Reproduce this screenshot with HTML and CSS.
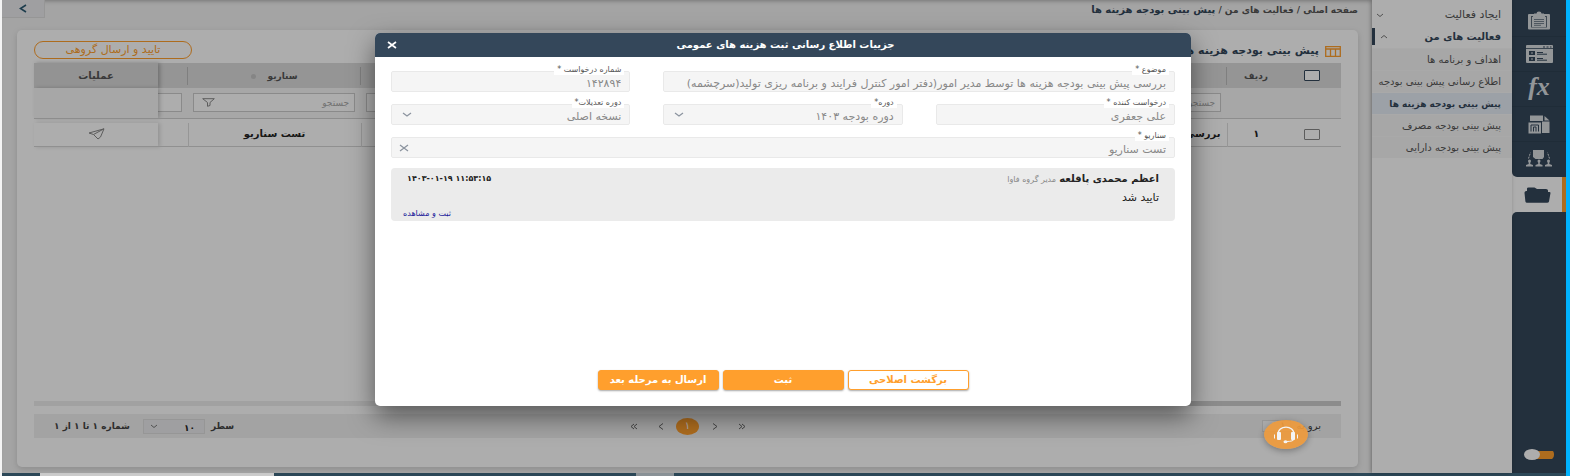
FILE: index.html
```html
<!DOCTYPE html>
<html lang="fa" dir="rtl">
<head>
<meta charset="utf-8">
<title>پیش بینی بودجه هزینه ها</title>
<link rel="stylesheet" href="styles.css">
</head>
<body>
<div class="app">
  <nav class="rail" aria-label="ماژول ها">
    <a class="rail-item" href="#" aria-label="فرم ها"><svg width="24" height="19" viewBox="0 0 24 19"><rect x="1" y="3" width="22" height="15.500" rx="1" fill="#d9dde1"/><path d="M7 5V2.500h2.500a2.500 2 0 0 1 5 0H17V5z" fill="#d9dde1"/><path d="M4 5v11.500h16V5h-2v1.500H6V5z" fill="#5a6978"/><rect x="5" y="6" width="14" height="10" fill="#d9dde1"/><path d="M7 8.500h10M7 10.500h10M7 12.500h10M7 14.300h7" stroke="#5a6978" stroke-width=".8"/></svg></a>
    <a class="rail-item" href="#" aria-label="لیست ها"><svg width="27" height="18" viewBox="0 0 27 18"><rect width="27" height="18" rx="1" fill="#d9dde1"/><path d="M0 3.500h27" stroke="#34475a" stroke-width=".8"/><path d="M17 2h2M20.500 2h2M24 2h1.500" stroke="#34475a"/><rect x="3" y="6" width="6" height="4" fill="#34475a"/><rect x="3" y="12" width="6" height="4" fill="#34475a"/><path d="M5 8h2M5 14h2" stroke="#d9dde1"/><path d="M11 7.500h6M11 9.200h10M11 13.500h6M11 15.200h10" stroke="#34475a"/></svg></a>
    <a class="rail-item fx" href="#">fx</a>
    <a class="rail-item" href="#" aria-label="گزارش ها"><svg width="22" height="19" viewBox="0 0 22 19"><path d="M2 .5h13V6H2z" fill="#d9dde1"/><path d="M14 6.500h7.500v11.500H14z" fill="#d9dde1"/><path d="M16.500 1l5 4.500h-5z" fill="#d9dde1"/><rect x=".5" y="7.500" width="12.500" height="11" fill="#d9dde1"/><path d="M3 16.500V10h7.500v6.500M5.500 16.500V12h2.500v4.500" stroke="#34475a" stroke-width="1" fill="none"/></svg></a>
    <a class="rail-item last" href="#" aria-label="جلسات"><svg width="26" height="18" viewBox="0 0 26 18"><path d="M7 1h11v7l-1.500 2H9.500L7 8z" fill="#d9dde1"/><path d="M2.500 9.500l2-6M23.500 9.500l-2-6" stroke="#d9dde1" stroke-dasharray="2 1"/><g fill="#d9dde1"><circle cx="3.500" cy="12" r="1.500"/><path d="M0 17.500V16l2.700-1v-2h1.600v2L7 16v1.500z"/><circle cx="13" cy="12" r="1.500"/><path d="M9.500 17.500V16l2.700-1v-2h1.600v2l2.700 1v1.500z"/><circle cx="22.500" cy="12" r="1.500"/><path d="M19 17.500V16l2.700-1v-2h1.600v2l2.700 1v1.500z"/></g></svg></a>
    <a class="rail-item active" href="#" aria-label="پوشه ها"><svg width="27" height="16" viewBox="0 0 27 16"><path d="M3 4V1.500Q3 .5 4.500.5h6L13 2h9q2 0 2 1.500V5h1.500q1 0 1 1l-1.500 8.500q-.3 1.200-2 1.200H3q-1.300 0-1.600-1.200L.5 6Q.3 4.500 2 4z" fill="#34475a"/></svg></a>
    <div class="rail-rest">
      <input class="switch" type="checkbox" checked aria-label="تغییر حالت">
    </div>
  </nav>

  <aside class="menu">
    <a class="menu-head" href="#">ایجاد فعالیت<svg class="chev" width="8" height="5" viewBox="0 0 8 5"><path d="M1 1l3 2.500L7 1"/></svg></a>
    <a class="menu-head open" href="#">فعالیت های من<svg class="chev" width="8" height="5" viewBox="0 0 8 5"><path d="M1 4l3-2.500L7 4"/></svg></a>
    <a class="menu-item" href="#">اهداف و برنامه ها</a>
    <a class="menu-item" href="#">اطلاع رسانی پیش بینی بودجه</a>
    <a class="menu-item current" href="#">پیش بینی بودجه هزینه ها</a>
    <a class="menu-item" href="#">پیش بینی بودجه مصرف</a>
    <a class="menu-item" href="#">پیش بینی بودجه دارایی</a>
  </aside>

  <main class="main">
    <header class="topbar">
      <nav class="crumbs" aria-label="مسیر"><a href="#">صفحه اصلی</a> / <a href="#">فعالیت های من</a> / <b>پیش بینی بودجه هزینه ها</b></nav>
      <button class="back" aria-label="بازگشت"><svg width="8" height="9" viewBox="0 0 8 9"><path d="M7 1L1.500 4.500 7 8" fill="none" stroke="#2c5a72" stroke-width="1.600"/></svg></button>
    </header>

    <section class="card">
      <div class="card-head">
        <h1><svg width="16" height="11" viewBox="0 0 16 11"><path d="M.7.700h14.600v9.600H.7zM.7 3h14.600M5.500 3v7M10.500 3v7" fill="none" stroke="#ff9f2d" stroke-width="1.300"/></svg>پیش بینی بودجه هزینه ها</h1>
        <button class="group-send">تایید و ارسال گروهی</button>
      </div>

      <table class="grid">
        <colgroup><col class="c-check"><col class="c-row"><col><col class="c-mid"><col class="c-scen"><col class="c-stub"><col class="c-ops"></colgroup>
        <thead>
          <tr class="titles">
            <th><input type="checkbox" class="box" aria-label="انتخاب همه"></th>
            <th>ردیف</th>
            <th class="split">موضوع</th>
            <th class="split">دوره</th>
            <th class="split">سناریو <span class="sort"></span></th>
            <th class="split"></th>
            <th class="ops">عملیات</th>
          </tr>
          <tr class="filters">
            <td></td><td></td>
            <td><div class="filter"><input type="text" placeholder="جستجو" aria-label="جستجو موضوع"></div></td>
            <td><div class="filter"><input type="text" placeholder="جستجو" aria-label="جستجو دوره"><svg width="13" height="9" viewBox="0 0 13 9"><path d="M.7.700h11.600L8 4.500v3L5.500 8.300V4.500z"/></svg></div></td>
            <td><div class="filter"><input type="text" placeholder="جستجو" aria-label="جستجو سناریو"><svg width="13" height="9" viewBox="0 0 13 9"><path d="M.7.700h11.600L8 4.500v3L5.500 8.300V4.500z"/></svg></div></td>
            <td class="stub"><div class="filter"></div></td>
            <td class="ops"></td>
          </tr>
        </thead>
        <tbody>
          <tr>
            <td><input type="checkbox" class="box" aria-label="انتخاب ردیف ۱"></td>
            <td>۱</td>
            <td class="split start">بررسی پیش بینی بودجه هزینه ها</td>
            <td class="split"></td>
            <td class="split">تست سناریو</td>
            <td class="split"></td>
            <td class="ops"><button class="plain" aria-label="ارسال"><svg width="17" height="12" viewBox="0 0 17 12"><path d="M16 .8L1 5l4.500 1.500L10 11l2.500-2zM16 .8L5.500 6.500" fill="none" stroke="#888"/></svg></button></td>
          </tr>
        </tbody>
      </table>

      <div class="scroll"><div class="thumb"></div></div>

      <footer class="pager">
        <div class="goto"><label for="goto">برو به</label><input id="goto" type="text" value="۱"></div>
        <div class="pages">
          <button aria-label="اول"><svg width="8" height="7" viewBox="0 0 8 7"><path d="M1 1l3 2.500L1 6M4 1l3 2.500L4 6"/></svg></button>
          <button aria-label="قبلی"><svg width="8" height="7" viewBox="0 0 8 7"><path d="M2 .5l4 3-4 3"/></svg></button>
          <button class="on">۱</button>
          <button aria-label="بعدی"><svg width="8" height="7" viewBox="0 0 8 7"><path d="M6 .5l-4 3 4 3"/></svg></button>
          <button aria-label="آخر"><svg width="8" height="7" viewBox="0 0 8 7"><path d="M7 1L4 3.500 7 6M4 1L1 3.500 4 6"/></svg></button>
        </div>
        <div class="rows"><label for="rows">سطر</label>
          <span class="rows-box"><select id="rows"><option>۱۰</option></select><svg class="chev" width="8" height="5" viewBox="0 0 8 5"><path d="M1 1l3 2.500L7 1"/></svg></span>
          <span>شماره ۱ تا ۱ از ۱</span></div>
      </footer>
    </section>
  </main>

  <div class="overlay">
    <section class="modal" role="dialog" aria-labelledby="dlg-title">
      <header class="modal-head">
        <h2 id="dlg-title">جزییات اطلاع رسانی ثبت هزینه های عمومی</h2>
        <button class="close" aria-label="بستن"><svg width="10" height="8" viewBox="0 0 10 8"><path d="M1 1l8 6M9 1L1 7" stroke="#fff" stroke-width="1.700"/></svg></button>
      </header>
      <form class="modal-body">
        <div class="fields">
          <div class="field two"><label for="f1">موضوع *</label><input id="f1" type="text" disabled value="بررسی پیش بینی بودجه هزینه ها توسط مدیر امور(دفتر امور کنترل فرایند و برنامه ریزی تولید(سرچشمه)"></div>
          <div class="field"><label for="f2">شماره درخواست *</label><input id="f2" type="text" disabled value="۱۴۲۸۹۴"></div>
          <div class="field"><label for="f3">درخواست کننده *</label><input id="f3" type="text" disabled value="علی جعفری"></div>
          <div class="field"><label for="f4">دوره*</label><select id="f4" disabled><option>دوره بودجه ۱۴۰۳</option></select><svg class="drop" width="10" height="6" viewBox="0 0 10 6"><path d="M1 1l4 3 4-3"/></svg></div>
          <div class="field"><label for="f5">دوره تعدیلات*</label><select id="f5" disabled><option>نسخه اصلی</option></select><svg class="drop" width="10" height="6" viewBox="0 0 10 6"><path d="M1 1l4 3 4-3"/></svg></div>
          <div class="field all"><label for="f6">سناریو *</label><input id="f6" type="text" disabled value="تست سناریو"><svg class="drop clear" width="10" height="8" viewBox="0 0 10 8"><path d="M1 1l8 6M9 1L1 7"/></svg></div>
        </div>
        <article class="note">
          <div class="note-head"><span><b>اعظم محمدی پاقلعه</b> <small>مدیر گروه فاوا</small></span><time dir="ltr">۱۴۰۳-۰۱-۱۹ ۱۱:۵۳:۱۵</time></div>
          <p>تایید شد</p>
          <a href="#">ثبت و مشاهده</a>
        </article>
        <div class="actions">
          <button type="button" class="btn outline">برگشت اصلاحی</button>
          <button type="button" class="btn">ثبت</button>
          <button type="button" class="btn">ارسال به مرحله بعد</button>
        </div>
      </form>
    </section>
    <button class="support" aria-label="پشتیبانی"><svg width="26" height="18" viewBox="0 0 26 18"><path d="M5 9C4.500-1.500 21.500-1.500 21 9" fill="none" stroke="#f4f4f4" stroke-width="1.300"/><rect x="4" y="6" width="4" height="8" rx="1" fill="#f4f4f4"/><rect x="18" y="6" width="4" height="8" rx="1" fill="#f4f4f4"/><path d="M1.500 8.500v4M24.500 8.500v4" stroke="#f4f4f4"/><path d="M21 13q0 2.500-8 2.500" fill="none" stroke="#f4f4f4"/><ellipse cx="12.500" cy="15.700" rx="2" ry="1.500" fill="#f4f4f4"/></svg></button>
  </div>
</div>
<div class="taskbar"><span class="search"></span><span class="task"></span></div>
</body>
</html>
```
FILE: styles.css
```css
* { box-sizing: border-box; }
body {
  margin: 0;
  min-height: 100vh;
  display: flex;
  flex-direction: column;
  padding-left: 2px;
  border-right: 4px solid #00b2ff;
  background: #f4f4f4;
  color: #444;
  font: 10px/16px "DejaVu Sans", sans-serif;
}
button, input, select { font: inherit; color: inherit; margin: 0; }
button { cursor: pointer; }
a { color: inherit; text-decoration: none; }
h1, h2, p { margin: 0; }

.app { position: relative; flex: 1; display: flex; background: #f2f2f2; }

/* icon rail */
.rail { flex: 0 0 54px; display: flex; flex-direction: column; background: #fff; }
.rail-item {
  height: 35px;
  display: flex;
  align-items: center;
  justify-content: center;
  background: #34475a;
  border-bottom: 1px solid #2f4153;
}
.rail-item:first-child { height: 37px; padding-top: 4px; }
.rail-item.last { border-radius: 0 0 0 5px; border-bottom: 0; padding-bottom: 3px; }
.rail-item.active { background: #fff; border-bottom: 0; border-right: 4px solid #ff9f2d; }
.rail-item.fx { color: #d9dde1; font: italic bold 26px/30px "Liberation Serif", serif; padding-bottom: 5px; }
.rail-rest {
  flex: 1;
  display: flex;
  align-items: flex-end;
  justify-content: center;
  padding-bottom: 13px;
  background: #34475a;
  border-radius: 5px 0 0 0;
}
.switch {
  appearance: none;
  width: 30px;
  height: 11px;
  display: flex;
  align-items: center;
  justify-content: flex-end;
  background: linear-gradient(#ff9f2d, #ff9f2d) right / 20px 8px no-repeat;
  border-radius: 5px;
}
.switch::before { content: ""; width: 16px; height: 11px; border-radius: 50%; background: #fff; }

/* side menu */
.menu { flex: 0 0 140px; background: #fff; box-shadow: -1px 0 4px rgba(0, 0, 0, .3); padding-top: 4px; color: #555; }
.menu a { display: flex; align-items: center; white-space: nowrap; padding-right: 11px; }
.menu-head { height: 22px; justify-content: space-between; padding-left: 4px; font-size: 11px; }
.menu-head.open { border-left: 3px solid #34475a; font-size: 10px; font-weight: bold; color: #34475a; padding-left: 5px; height: 17px; margin: 2px 0 3px; }
.menu-item { height: 22px; background: #f7f7f7; border-top: 1px solid #fafafa; }
.menu-item.current { background: #e6eef7; color: #34475a; font-size: 9px; font-weight: bold; }
.chev path { fill: none; stroke: #777; stroke-width: 1; }

/* page */
.main { flex: 1; min-width: 0; display: flex; flex-direction: column; padding: 0 14px 6px 15px; box-shadow: inset 0 4px 4px -3px rgba(0, 0, 0, .3); }
.topbar { display: flex; justify-content: space-between; height: 30px; margin-left: -15px; }
.crumbs { padding-top: 2px; font-weight: bold; font-size: 9px; color: #555; }
.crumbs b { color: #34475a; font-size: 10px; }
.back { width: 43px; height: 18px; border: 1px solid #ddd; border-width: 0 1px 1px 0; background: #eaebee; display: flex; align-items: center; padding: 0 17px; direction: ltr; }

.card { flex: 1; display: flex; flex-direction: column; background: #fff; border-radius: 5px; padding: 11px 17px 29px; box-shadow: 0 2px 6px rgba(0, 0, 0, .15); }
.card-head { display: flex; justify-content: space-between; height: 22px; }
h1 { display: flex; align-items: center; gap: 6px; height: 20px; font-size: 11px; color: #34475a; }
.group-send { width: 158px; height: 18px; border: 1px solid #ff9f2d; border-radius: 50px; background: none; color: #ff9f2d; font-size: 11px; line-height: 14px; padding: 0; }

.grid { width: 100%; table-layout: fixed; border-collapse: collapse; text-align: center; }
.c-check { width: 56px; }
.c-row { width: 58px; }
.c-mid { width: 173px; }
.c-scen { width: 173px; }
.c-stub { width: 30px; }
.c-ops { width: 124px; }
.grid th, .grid td { padding: 0; }
.titles { height: 25px; background: #dcdcdc; color: #555; font-size: 9px; }
.titles th.split { background: linear-gradient(#bbb, #bbb) right / 1px 18px no-repeat; }
.titles .ops { background: #d9d9d9; box-shadow: 2px 0 4px rgba(0, 0, 0, .25); font-size: 10px; }
.filters { height: 30px; background: #f6f6f6; border-bottom: 1px solid #d0d0d0; }
.filters .ops { box-shadow: 2px 0 4px rgba(0, 0, 0, .2); }
.filter { display: flex; align-items: center; height: 19px; margin: 0 6px 0 5px; padding: 0 5px 0 8px; border: 1px solid #ccc; background: #fff; }
.stub .filter { margin-left: 0; border-left: 0; }
.filter input { flex: 1; min-width: 0; border: 0; padding: 0; background: none; font-size: 9px; }
.filter input::placeholder { color: #aaa; }
.filter path { fill: none; stroke: #888; }
.grid tbody::before { content: ""; display: block; height: 4px; }
.grid tbody tr { height: 24px; border-bottom: 1px solid #d4d4d4; color: #222; font-weight: bold; }
.grid tbody .split { border-right: 1px solid #ddd; white-space: nowrap; overflow: hidden; }
.grid tbody .start { text-align: right; padding-right: 6px; }
.grid tbody .ops { box-shadow: 2px 0 4px rgba(0, 0, 0, .15); }
.sort { display: inline-block; width: 5px; height: 5px; border-radius: 50%; background: #c4c4c4; margin-right: 8px; vertical-align: middle; }
.box { appearance: none; display: block; width: 16px; height: 11px; margin: 0 21px 0 0; border: 1px solid #888; border-radius: 1px; background: #fff; }
.titles .box { border-color: #34475a; }
.plain { border: 0; background: none; padding: 0; display: inline-flex; vertical-align: middle; }

.scroll { margin-top: auto; height: 5px; background: #eee; }
.thumb { width: 60%; height: 5px; background: #cfcfcf; }
.pager { display: flex; justify-content: space-between; align-items: center; height: 24px; margin-top: 8px; padding: 0 20px; background: #f0f0f0; }
.goto { flex: 1; display: flex; align-items: center; gap: 6px; }
.goto input { width: 29px; height: 12px; border: 1px solid #ddd; background: #fafafa; padding: 0 4px; }
.pages { display: flex; align-items: center; gap: 4px; }
.pages button { width: 23px; height: 17px; padding: 0; border: 0; background: none; display: flex; align-items: center; justify-content: center; }
.pages path { fill: none; stroke: #666; }
.pages .on { background: #ff9f2d; color: #fff; border-radius: 50%; }
.rows { flex: 1; display: flex; align-items: center; justify-content: flex-end; gap: 6px; font-weight: bold; font-size: 9px; }
.rows-box { position: relative; width: 62px; margin-left: 7px; }
.rows-box select { appearance: none; display: block; width: 100%; height: 15px; border: 1px solid #ddd; background: #eaebee; padding: 0 9px; color: #222; }
.rows-box .chev { position: absolute; left: 7px; top: 5px; }

/* dialog */
.overlay { position: absolute; inset: 0; display: flex; align-items: flex-start; padding: 33px 375px 67px 373px; background: rgba(0, 0, 0, .32); }
.modal { width: 100%; height: 100%; display: flex; flex-direction: column; background: #fff; border-radius: 5px; overflow: hidden; box-shadow: 0 10px 26px rgba(0, 0, 0, .5); }
.modal-head { display: flex; align-items: center; height: 24px; background: #34475a; color: #fff; padding: 0 17px 0 12px; }
.modal-head h2 { flex: 1; text-align: center; font-size: 10px; }
.close { border: 0; background: none; padding: 0; display: flex; }
.modal-body { flex: 1; display: flex; flex-direction: column; padding: 14px 16px 16px; }
.fields { display: grid; grid-template-columns: repeat(3, 1fr); gap: 12px 33px; }
.field { position: relative; }
.two { grid-column: span 2; }
.all { grid-column: span 3; }
.field label { position: absolute; top: -6px; right: 6px; padding: 0 3px; background: #fff; font-size: 8px; line-height: 10px; color: #555; }
.field input, .field select { appearance: none; display: block; width: 100%; height: 21px; padding: 4px 8px 0; border: 1px solid #e9e9e9; border-radius: 2px; background: #f5f5f5; color: #888; opacity: 1; font-size: 11px; line-height: 14px; }
.drop { position: absolute; left: 11px; top: 8px; }
.clear { left: 8px; top: 7px; }
.drop path { fill: none; stroke: #8d95a0; stroke-width: 1.300; }
.note { margin-top: 10px; padding: 3px 16px 0 12px; min-height: 53px; border-radius: 4px; background: #ebebeb; color: #222; }
.note-head { display: flex; justify-content: space-between; padding-left: 4px; }
.note small { font-size: 8px; color: #888; }
.note time { font-weight: bold; font-size: 8px; }
.note p { font-size: 11px; line-height: 20px; }
.note a { display: block; text-align: left; font-size: 8px; line-height: 12px; color: #1a1a9a; }
.actions { margin-top: auto; display: flex; justify-content: center; gap: 4px; }
.btn { width: 121px; height: 20px; padding: 0; border: 1px solid #ff9f2d; border-radius: 3px; background: #ff9f2d; color: #fff; font-weight: bold; font-size: 10px; line-height: 16px; box-shadow: 0 1px 2px rgba(0, 0, 0, .35); }
.outline { background: #fff; color: #ff9f2d; }
.support { position: absolute; right: 258px; bottom: 24px; width: 44px; height: 29px; display: flex; align-items: center; justify-content: center; border: 0; border-radius: 50%; background: rgba(240, 154, 58, .9); box-shadow: 0 2px 6px rgba(0, 0, 0, .3); }

.taskbar { height: 3px; display: flex; direction: ltr; gap: 362px; padding-left: 38px; background: #2c4858; }
.search { width: 234px; background: #ccc; }
.task { width: 38px; background: #8a9297; }
```
